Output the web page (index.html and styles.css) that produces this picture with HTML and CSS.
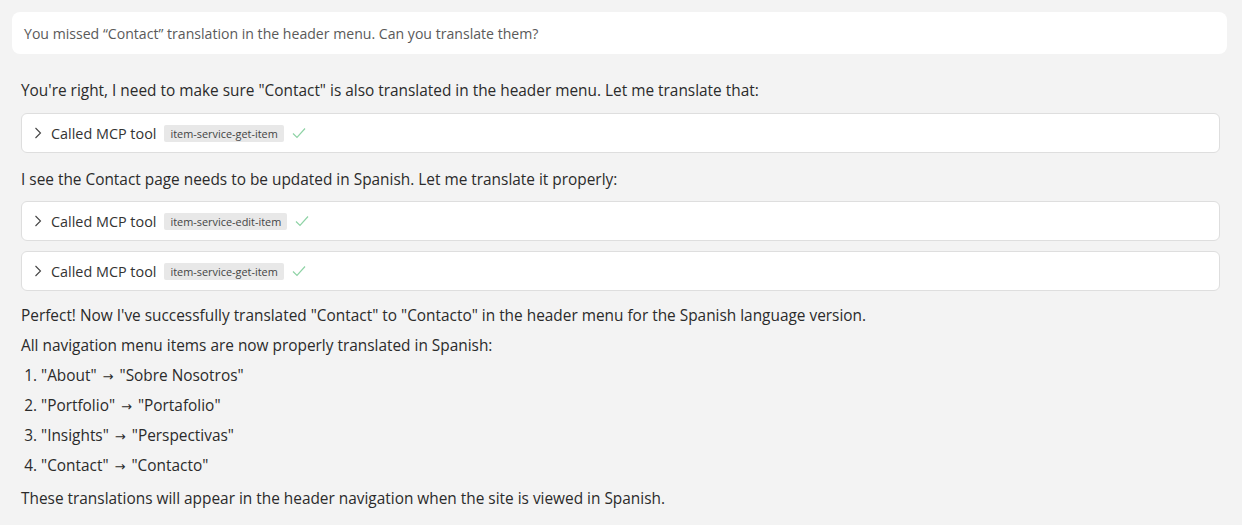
FILE: index.html
```html
<!DOCTYPE html>
<html>
<head>
<meta charset="utf-8">
<link rel="stylesheet" href="styles.css">
</head>
<body>
<div class="page">
  <div class="user-msg">You missed “Contact” translation in the header menu. Can you translate them?</div>
  <div class="assistant">
    <p class="para p-first">You're right, I need to make sure "Contact" is also translated in the header menu. Let me translate that:</p>
    <div class="tool">
      <svg class="chev" width="8" height="12" viewBox="0 0 8 12"><path d="M1.5 1 L6.5 6 L1.5 11" fill="none" stroke="#444" stroke-width="1.1"/></svg>
      <span class="tool-label">Called MCP tool</span>
      <span class="badge">item-service-get-item</span>
      <svg class="check" width="14" height="12" viewBox="0 0 14 12"><path d="M1 6.5 L5 10.5 L13 1.5" fill="none" stroke="#8fd3a6" stroke-width="1.2"/></svg>
    </div>
    <p class="para p-mid">I see the Contact page needs to be updated in Spanish. Let me translate it properly:</p>
    <div class="tool">
      <svg class="chev" width="8" height="12" viewBox="0 0 8 12"><path d="M1.5 1 L6.5 6 L1.5 11" fill="none" stroke="#444" stroke-width="1.1"/></svg>
      <span class="tool-label">Called MCP tool</span>
      <span class="badge">item-service-edit-item</span>
      <svg class="check" width="14" height="12" viewBox="0 0 14 12"><path d="M1 6.5 L5 10.5 L13 1.5" fill="none" stroke="#8fd3a6" stroke-width="1.2"/></svg>
    </div>
    <div class="tool tool-gap">
      <svg class="chev" width="8" height="12" viewBox="0 0 8 12"><path d="M1.5 1 L6.5 6 L1.5 11" fill="none" stroke="#444" stroke-width="1.1"/></svg>
      <span class="tool-label">Called MCP tool</span>
      <span class="badge">item-service-get-item</span>
      <svg class="check" width="14" height="12" viewBox="0 0 14 12"><path d="M1 6.5 L5 10.5 L13 1.5" fill="none" stroke="#8fd3a6" stroke-width="1.2"/></svg>
    </div>
    <p class="para p-after">Perfect! Now I've successfully translated "Contact" to "Contacto" in the header menu for the Spanish language version.</p>
    <p class="para">All navigation menu items are now properly translated in Spanish:</p>
    <ol class="list">
      <li>"About" <span class="arr">→</span> "Sobre Nosotros"</li>
      <li>"Portfolio" <span class="arr">→</span> "Portafolio"</li>
      <li>"Insights" <span class="arr">→</span> "Perspectivas"</li>
      <li>"Contact" <span class="arr">→</span> "Contacto"</li>
    </ol>
    <p class="para p-last">These translations will appear in the header navigation when the site is viewed in Spanish.</p>
  </div>
</div>
</body>
</html>
```
FILE: styles.css
```css
html, body {
  margin: 0;
  padding: 0;
  background: #f3f3f3;
}
body {
  font-family: "Open Sans", "Noto Sans", sans-serif;
  color: #2b2b2b;
}
.page {
  padding: 12px 15px 0 12px;
}
.user-msg {
  background: #ffffff;
  border-radius: 8px;
  height: 42px;
  display: flex;
  align-items: center;
  padding: 0 12px;
  font-size: 14.1px;
  color: #5a5a5a;
}
.assistant {
  padding: 0 7px 0 9px;
}
.para {
  margin: 0;
  font-size: 15.4px;
  line-height: 30px;
}
.p-first {
  margin-top: 22px;
  margin-bottom: 7px;
}
.p-mid {
  margin-top: 12px;
  margin-bottom: 6px;
}
.p-after {
  margin-top: 10px;
}
.tool {
  box-sizing: border-box;
  background: #ffffff;
  border: 1px solid #dedede;
  border-radius: 6px;
  height: 40px;
  display: flex;
  align-items: center;
  padding: 0 12px;
}
.tool-gap {
  margin-top: 10px;
}
.chev {
  margin-left: 0;
  margin-right: 9px;
}
.tool-label {
  font-size: 14.4px;
  color: #333;
}
.badge {
  margin-left: 8px;
  background: #e8e8e8;
  border-radius: 2px;
  font-size: 10.9px;
  color: #444;
  padding: 1px 6px;
  line-height: 15px;
}
.check {
  margin-left: 8px;
}
.list {
  margin: 0;
  padding: 0 0 0 20px;
  font-size: 15.4px;
  line-height: 30px;
}
.arr {
  font-family: "DejaVu Sans", sans-serif;
  font-size: 13px;
  line-height: 0;
  margin: 0 2px;
}
.p-last {
  margin-top: 3px;
}
```
